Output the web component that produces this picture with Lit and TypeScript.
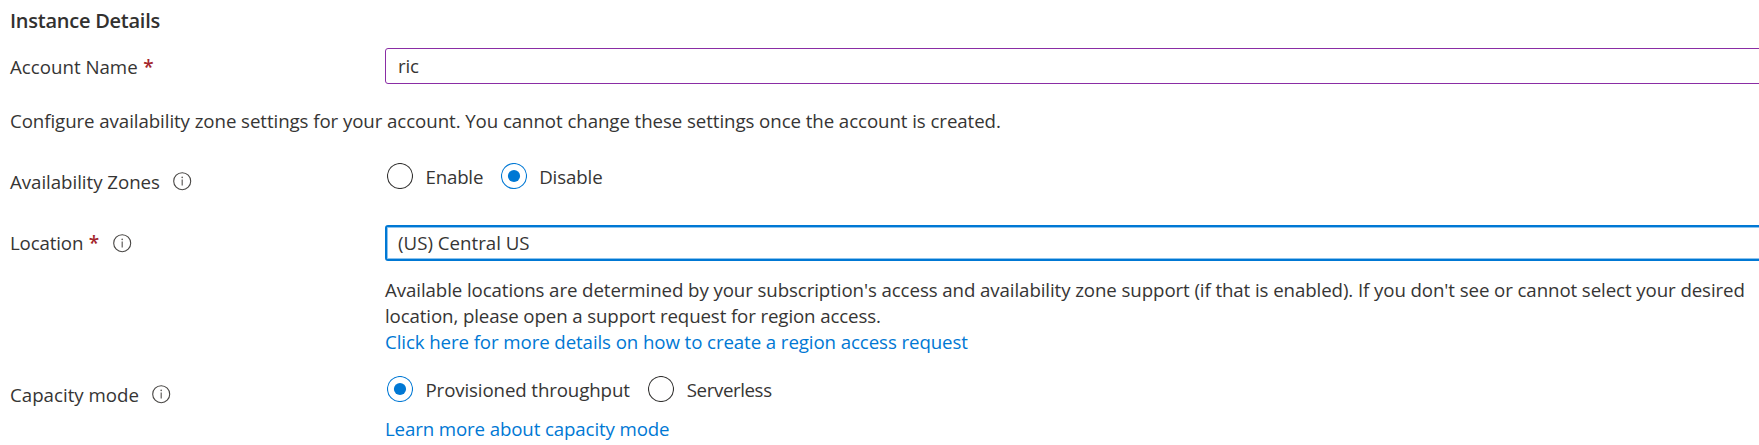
import { LitElement, html, svg, css } from "lit";
import { customElement, property } from "lit/decorators.js";

@customElement("info-icon")
class InfoIcon extends LitElement {
  static styles = css`
    :host { display: block; flex: none; width: 19px; height: 19px; }
    svg { display: block; }
  `;
  render() {
    return html`<svg width="19" height="19" viewBox="0 0 19 19" fill="none">
      <circle cx="9.2" cy="9.2" r="8.5" stroke="#484644" stroke-width="1.1" />
      <path d="M9.2 7.4V13.4" stroke="#605e5c" stroke-width="1.2" />
      <circle cx="9.2" cy="5.4" r="0.8" fill="#605e5c" />
    </svg>`;
  }
}

@customElement("radio-option")
class RadioOption extends LitElement {
  @property({ type: Boolean }) checked = false;
  static styles = css`
    :host { display: flex; align-items: flex-start; gap: 12.5px; }
    svg { display: block; flex: none; }
    .label { padding-top: 1px; white-space: nowrap; }
  `;
  render() {
    return html`<svg width="26" height="26" viewBox="0 0 26 26" fill="none">
        <circle cx="13" cy="13" r="12.5" stroke=${this.checked ? "#0078d4" : "#323130"} stroke-width="1.1" />
        ${this.checked ? svg`<circle cx="13" cy="13" r="6.1" fill="#0078d4" />` : ""}
      </svg>
      <span class="label"><slot></slot></span>`;
  }
}

@customElement("app-root")
class AppRoot extends LitElement {
  static styles = css`
    :host {
      display: block; box-sizing: border-box; height: 445px; overflow: hidden;
      padding: 8px 0 0 10px; background: #fff; color: #363534;
      font: 400 18.7px/26px "Open Sans", "Noto Sans", sans-serif;
    }
    h2 { margin: 0; font-size: 20px; line-height: 26px; font-weight: 600; letter-spacing: -0.25px; color: #323130; }
    p { margin: 0; white-space: nowrap; }
    .row { display: grid; grid-template-columns: 375px 1fr; align-items: start; }
    .label { display: flex; align-items: flex-start; white-space: nowrap; }
    .label info-icon { margin-top: 3px; margin-left: 14px; }
    .req { color: #a4262c; font-weight: 600; font-size: 19px; margin-left: 5.5px; height: 26px; }
    .account { margin-top: 14px; }
    .account .label { padding-top: 6px; }
    .intro { margin-top: 24px; letter-spacing: -0.078px; }
    .zones { margin-top: 29px; }
    .zones .label, .capacity .label { padding-top: 6px; }
    .location { margin-top: 30px; }
    .location .label { padding-top: 5px; }
    .location .label info-icon { margin-top: 4px; margin-left: 14px; }
    .capacity { margin-top: 21px; }
    .capacity .label info-icon { margin-left: 13px; }
    .radios { display: flex; gap: 18.5px; padding-left: 2px; }
    .zones .radios { gap: 17.5px; }
    .input {
      box-sizing: border-box; height: 36px; margin-right: -8px; padding: 4px 12px;
      border: 1px solid #8a2da5; border-radius: 3px;
    }
    .input.focus { padding: 3px 11px; border: 2px solid #0078d4; box-shadow: inset 0 0 0 1px #8cc3ee; }
    .help { margin-top: 16px; }
    .link { color: #0078d4; }
    .more { margin-top: 13px; letter-spacing: -0.13px; }
    .s-zones { letter-spacing: -0.04px; }
    .zones .label info-icon { margin-left: 13.5px; }
    .s-loc { letter-spacing: -0.14px; }
    .s-enable { letter-spacing: -0.2px; }
    .s-disable { letter-spacing: -0.13px; }
    .s-ric { letter-spacing: -0.2px; }
    .s-h1 { letter-spacing: -0.094px; }
    .s-h2 { letter-spacing: -0.118px; }
    .s-h3 { letter-spacing: -0.1px; }
    .s-prov { letter-spacing: -0.12px; }
    .s-less { letter-spacing: -0.4px; }
  `;
  render() {
    return html`
      <h2>Instance Details</h2>
      <div class="row account">
        <div class="label"><span>Account Name</span><span class="req">*</span></div>
        <div class="input"><span class="s-ric">ric</span></div>
      </div>
      <p class="intro">Configure availability zone settings for your account. You cannot change these settings once the account is created.</p>
      <div class="row zones">
        <div class="label"><span class="s-zones">Availability Zones</span><info-icon></info-icon></div>
        <div class="radios">
          <radio-option><span class="s-enable">Enable</span></radio-option>
          <radio-option checked><span class="s-disable">Disable</span></radio-option>
        </div>
      </div>
      <div class="row location">
        <div class="label"><span class="s-loc">Location</span><span class="req">*</span><info-icon></info-icon></div>
        <div>
          <div class="input focus"><span>(US) Central US</span></div>
          <div class="help">
            <p class="s-h1">Available locations are determined by your subscription's access and availability zone support (if that is enabled). If you don't see or cannot select your desired</p>
            <p class="s-h2">location, please open a support request for region access.</p>
            <p class="s-h3 link">Click here for more details on how to create a region access request</p>
          </div>
        </div>
      </div>
      <div class="row capacity">
        <div class="label"><span>Capacity mode</span><info-icon></info-icon></div>
        <div>
          <div class="radios">
            <radio-option checked><span class="s-prov">Provisioned throughput</span></radio-option>
            <radio-option><span class="s-less">Serverless</span></radio-option>
          </div>
          <p class="more link">Learn more about capacity mode</p>
        </div>
      </div>
    `;
  }
}
